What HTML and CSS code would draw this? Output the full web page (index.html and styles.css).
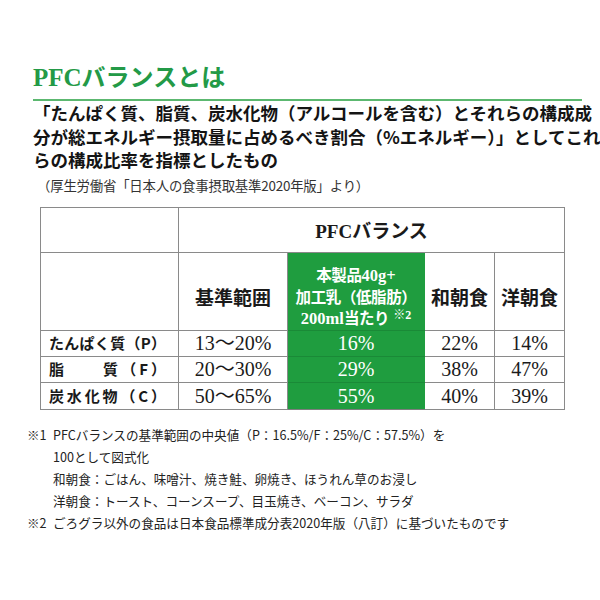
FILE: index.html
```html
<!DOCTYPE html>
<html lang="ja">
<head>
<meta charset="utf-8">
<link rel="stylesheet" href="styles.css">
</head>
<body>
<div class="page">
  <h1 class="title"><span class="lat">PFC</span>バランスとは</h1>
  <div class="rule"></div>
  <div class="lead">
    <div class="jl">「たんぱく質、脂質、炭水化物（アルコールを含む）とそれらの構成成</div>
    <div class="jl">分が総エネルギー摂取量に占めるべき割合（%エネルギー）」としてこれ</div>
    <div class="ln">らの構成比率を指標としたもの</div>
  </div>
  <div class="source">（厚生労働省「日本人の食事摂取基準2020年版」より）</div>

  <table class="pfc">
    <colgroup>
      <col class="c1"><col class="c2"><col class="c3"><col class="c4"><col class="c5">
    </colgroup>
    <tr class="r1">
      <td></td>
      <td colspan="4" class="hd"><span class="lat">PFC</span>バランス</td>
    </tr>
    <tr class="r2">
      <td></td>
      <td class="hd">基準範囲</td>
      <td class="green ghd">本製品<span class="lat">40g+</span><br>加工乳（低脂肪）<br><span class="lat">200ml</span>当たり<span class="sup lat">※2</span></td>
      <td class="hd">和朝食</td>
      <td class="hd">洋朝食</td>
    </tr>
    <tr class="row">
      <td class="lab"><span class="labt">たんぱく質（P）</span></td>
      <td class="val">13〜20%</td>
      <td class="val green">16%</td>
      <td class="val">22%</td>
      <td class="val">14%</td>
    </tr>
    <tr class="row">
      <td class="lab"><span class="labt">脂　　質（F）</span></td>
      <td class="val">20〜30%</td>
      <td class="val green">29%</td>
      <td class="val">38%</td>
      <td class="val">47%</td>
    </tr>
    <tr class="row last">
      <td class="lab"><span class="labt">炭水化物（C）</span></td>
      <td class="val">50〜65%</td>
      <td class="val green">55%</td>
      <td class="val">40%</td>
      <td class="val">39%</td>
    </tr>
  </table>

  <div class="notes">
    <div class="note"><span class="mk">※1</span><span class="nt">PFCバランスの基準範囲の中央値（P：16.5%/F：25%/C：57.5%）を<br>100として図式化<br>和朝食：ごはん、味噌汁、焼き鮭、卵焼き、ほうれん草のお浸し<br>洋朝食：トースト、コーンスープ、目玉焼き、ベーコン、サラダ</span></div>
    <div class="note"><span class="mk">※2</span><span class="nt">ごろグラ以外の食品は日本食品標準成分表2020年版（八訂）に基づいたものです</span></div>
  </div>
</div>
</body>
</html>
```

FILE: styles.css
```css
html, body {
  margin: 0;
  padding: 0;
  background: #ffffff;
}
.page {
  width: 600px;
  height: 600px;
  box-sizing: border-box;
  padding: 61px 18px 0 33px;
  font-family: "Noto Sans CJK JP", sans-serif;
  color: #1a1a1a;
}
.lat {
  font-family: "Liberation Serif", "Noto Sans CJK JP", serif;
}
.title {
  margin: 0;
  font-size: 24px;
  line-height: 30px;
  font-weight: 700;
  color: #239a47;
  letter-spacing: 0;
}
.title .lat {
  font-size: 25px;
}
.rule {
  height: 2px;
  background: #5cb870;
  margin-top: 6px;
  width: 549px;
}
.lead {
  margin-top: 0;
  font-size: 17.5px;
  line-height: 23.5px;
  font-weight: 700;
  color: #141414;
  width: 538px;
}
.jl {
  text-align: justify;
  text-align-last: justify;
  white-space: nowrap;
}
.ln {
  white-space: nowrap;
}
.source {
  margin-top: 4px;
  margin-left: 4px;
  font-size: 13.4px;
  line-height: 18px;
  color: #333333;
  letter-spacing: -0.2px;
}
.pfc {
  margin-top: 13px;
  margin-left: 7px;
  border-collapse: collapse;
  table-layout: fixed;
  width: 524px;
  border: 1.5px solid #7d7d7d;
}
.c1 { width: 138px; }
.c2 { width: 109px; }
.c3 { width: 137px; }
.c4 { width: 70px; }
.c5 { width: 70px; }
.pfc td {
  border: 1.5px solid #8a8a8a;
  padding: 0;
  text-align: center;
  vertical-align: middle;
}
.r1 td { height: 42px; }
.r2 td { height: 66px; padding-top: 11px; }
.row td { height: 25px; }
.row.last td { height: 26px; }
.hd {
  font-size: 19px;
  font-weight: 700;
  color: #1a1a1a;
  line-height: 24px;
}
.r1 .hd { padding-top: 2px; }
.green {
  background: #1f9d3f;
  color: #ffffff;
}
.pfc td.green {
  border-left-color: #1f9d3f;
  border-right-color: #1f9d3f;
  border-bottom-color: #1a8a37;
}
.pfc tr.last td.green {
  border-bottom-color: #7d7d7d;
}
.ghd {
  font-size: 15.5px;
  font-weight: 700;
  line-height: 21px;
  letter-spacing: -0.4px;
}
.ghd .lat {
  font-size: 16.5px;
  letter-spacing: 0;
}
.ghd .sup {
  font-size: 12px;
  line-height: 10px;
  vertical-align: 5px;
  margin-left: 4px;
  font-weight: 700;
}
.lab {
  text-align: left !important;
  padding: 0 12px 0 8px !important;
}
.labt {
  display: block;
  font-size: 15px;
  font-weight: 700;
  line-height: 20px;
  text-align: justify;
  text-align-last: justify;
  color: #1a1a1a;
  white-space: nowrap;
}
.val {
  font-family: "Liberation Serif", "Noto Sans CJK JP", serif;
  font-size: 20px;
  line-height: 22px;
  color: #1a1a1a;
}
.val.green {
  color: #ffffff;
}
.notes {
  margin-top: 14px;
  margin-left: -6px;
  font-size: 12.6px;
  line-height: 22px;
  color: #222222;
}
.note {
  display: flex;
}
.mk {
  width: 26px;
  flex: none;
}
.nt {
  white-space: nowrap;
}
```
